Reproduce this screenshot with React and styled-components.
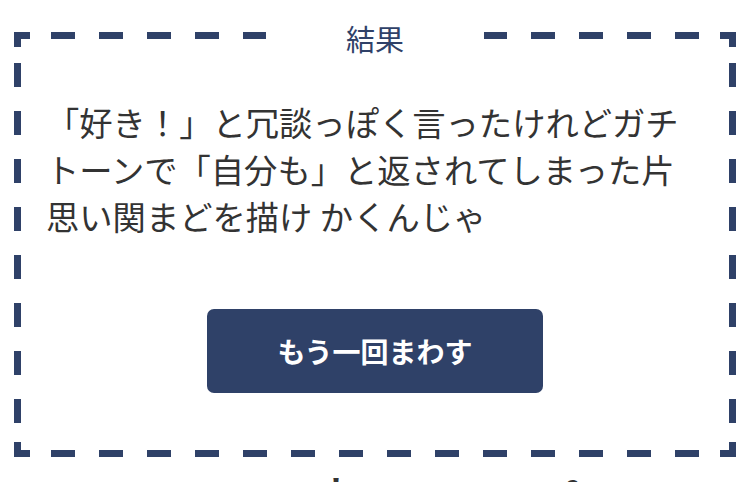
import styled, { createGlobalStyle } from 'styled-components';

const navy = '#2f4168';
const edge = 7;

const GlobalStyle = createGlobalStyle`
	html, body {
		margin: 0;
		background: #fff;
	}
	body {
		font-family: 'Noto Sans CJK JP', 'Noto Sans', sans-serif;
		color: #333;
	}
`;

// solid bar used for the corner pieces of the frame
const bar = `linear-gradient(${navy}, ${navy})`;

const Page = styled.div`
	padding: 32px 14px 0;
	height: 482px;
	box-sizing: border-box;
	overflow: hidden;
`;

const Frame = styled.section`
	position: relative;
	display: flex;
	flex-direction: column;
	padding: 66px 20px 64px;
	background:
		${bar} left top / 16px ${edge}px no-repeat,
		${bar} left top / ${edge}px 15px no-repeat,
		${bar} right top / 16px ${edge}px no-repeat,
		${bar} right top / ${edge}px 15px no-repeat,
		${bar} left bottom / 16px ${edge}px no-repeat,
		${bar} left bottom / ${edge}px 15px no-repeat,
		${bar} right bottom / 16px ${edge}px no-repeat,
		${bar} right bottom / ${edge}px 15px no-repeat,
		linear-gradient(to right, ${navy} 24px, transparent 24px) -11px top / 48px ${edge}px repeat-x,
		linear-gradient(to right, ${navy} 24px, transparent 24px) -11px bottom / 48px ${edge}px repeat-x,
		linear-gradient(to bottom, ${navy} 24px, transparent 24px) left -17px / ${edge}px 48px repeat-y,
		linear-gradient(to bottom, ${navy} 24px, transparent 24px) right -17px / ${edge}px 48px repeat-y;
`;

const Legend = styled.h2`
	position: absolute;
	top: -15px;
	left: 50%;
	transform: translateX(-50%);
	margin: 0;
	padding: 0 80px;
	background: #fff;
	color: ${navy};
	font-size: 29px;
	font-weight: 400;
	white-space: nowrap;
`;

const Message = styled.p`
	margin: 0;
	padding: 0 20px 0 12px;
	font-size: 33.3px;
	line-height: 47px;
	color: #333;
	text-spacing-trim: space-all;
`;

const Actions = styled.div`
	display: flex;
	justify-content: center;
	margin-top: 70px;
`;

const SpinButton = styled.button`
	width: 336px;
	height: 84px;
	border: none;
	border-radius: 7px;
	background: ${navy};
	color: #fff;
	font-family: inherit;
	font-size: 28px;
	font-weight: 700;
	cursor: pointer;
`;

const NextRow = styled.div`
	display: flex;
	gap: 205px;
	margin-top: 10px;
	padding-left: 309px;
	font-size: 34px;
	font-weight: 700;
	line-height: 47px;
	color: #333;
`;

const App = () => {
	return (
		<>
			<GlobalStyle />
			<Page>
				<Frame>
					<Legend>結果</Legend>
					<Message>
						「好き！」と冗談っぽく言ったけれどガチトーンで「自分も」と返されてしまった片思い関まどを描け かくんじゃ
					</Message>
					<Actions>
						<SpinButton type="button">もう一回まわす</SpinButton>
					</Actions>
				</Frame>
				<NextRow>
					<span>ト</span>
					<span>&amp;</span>
				</NextRow>
			</Page>
		</>
	);
};

export default App;
